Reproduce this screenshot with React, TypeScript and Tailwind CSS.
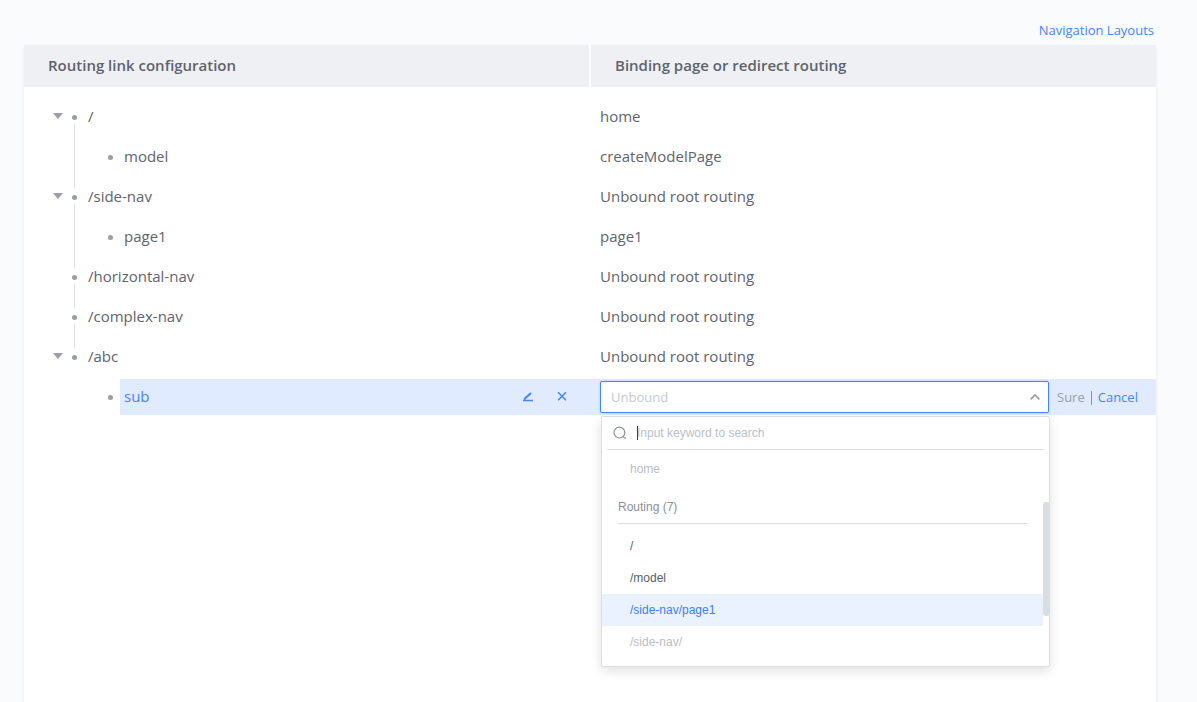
import { useState } from "react";

type Route = {
  label: string;
  target: string;
  depth: 0 | 1;
  open?: boolean;
  lineAbove?: boolean;
  lineBelow?: boolean;
};

const routes: Route[] = [
  { label: "/", target: "home", depth: 0, open: true, lineBelow: true },
  { label: "model", target: "createModelPage", depth: 1, lineAbove: true, lineBelow: true },
  { label: "/side-nav", target: "Unbound root routing", depth: 0, open: true, lineAbove: true, lineBelow: true },
  { label: "page1", target: "page1", depth: 1, lineAbove: true, lineBelow: true },
  { label: "/horizontal-nav", target: "Unbound root routing", depth: 0, lineAbove: true, lineBelow: true },
  { label: "/complex-nav", target: "Unbound root routing", depth: 0, lineAbove: true, lineBelow: true },
  { label: "/abc", target: "Unbound root routing", depth: 0, open: true, lineAbove: true },
];

const Dot = () => <span className="size-[5px] shrink-0 rounded-full bg-[#9b9ea8]" />;

function Gutter({ above, below, dot }: { above?: boolean; below?: boolean; dot?: boolean }) {
  const line = "w-px bg-[#dfe1e6]";
  return (
    <span className="flex h-10 w-[5px] shrink-0 flex-col items-center">
      <span className={above ? `${line} h-[11px]` : "h-[11px]"} />
      {dot ? (
        <span className="flex h-4 items-end pb-1">
          <Dot />
        </span>
      ) : (
        <span className={above && below ? `${line} h-4` : "h-4"} />
      )}
      <span className={below ? `${line} h-[13px]` : "h-[13px]"} />
    </span>
  );
}

function Toggle({ label }: { label: string }) {
  return (
    <button type="button" aria-label={`Collapse ${label}`} aria-expanded="true" className="w-[10px] shrink-0 pb-[2px]">
      <svg viewBox="0 0 10 6" className="block h-[6px] w-[10px] fill-[#9b9ea8]">
        <path d="M0 0h10L5 6z" />
      </svg>
    </button>
  );
}

function RouteRow({ route }: { route: Route }) {
  const child = route.depth === 1;
  return (
    <tr>
      <td className="p-0">
        <div className="flex h-10 items-center pl-[29px]">
          {route.open ? <Toggle label={route.label} /> : <span className="w-[10px]" />}
          <span className="w-[9px]" />
          <Gutter above={route.lineAbove} below={route.lineBelow} dot={!child} />
          {child && (
            <span className="flex pl-[31px]">
              <Dot />
            </span>
          )}
          <span className="pb-[2px] pl-[11px]">{route.label}</span>
        </div>
      </td>
      <td className="p-0 pb-[2px] pl-[10px]">{route.target}</td>
    </tr>
  );
}

const options = [
  { label: "/", style: "text-[#5a5e66]" },
  { label: "/model", style: "text-[#5a5e66]" },
  { label: "/side-nav/page1", style: "bg-[#ebf2ff] text-[#3d7dff]" },
  { label: "/side-nav/", style: "text-[#babdc3]" },
];

function Dropdown({ query, onQuery }: { query: string; onQuery: (value: string) => void }) {
  return (
    <div className="absolute top-full -right-px left-px z-10 mt-[3px] rounded-[2px] border border-[#dcdee6] bg-white pb-2 font-['Liberation_Sans',Arial,sans-serif] text-[12px] shadow-[0_4px_12px_rgba(0,0,0,0.12)]">
      <label className="mr-[5px] ml-[5px] flex h-[33px] items-center border-b border-[#dcdee6] pl-[6px]">
        <svg viewBox="0 0 14 14" className="size-[14px] shrink-0 fill-none stroke-[#8f939b] stroke-[1.2]">
          <circle cx="6.4" cy="6.6" r="5.4" />
          <path d="M9.8 10.4c1 1.2 1.8 1.6 3.2 2" />
        </svg>
        <span className="ml-[10px] h-[14px] w-px bg-[#33363d]" />
        <input
          aria-label="Search"
          placeholder="Input keyword to search"
          value={query}
          onChange={(e) => onQuery(e.target.value)}
          className="-ml-px min-w-0 flex-1 bg-transparent text-[#5a5e66] outline-none placeholder:text-[#b8bfcd]"
        />
      </label>
      <div role="listbox" aria-label="Pages and routing" className="pt-[3px] pr-[6px]">
        <div role="option" aria-selected="false" className="flex h-8 items-center pl-7 text-[#babdc3]">
          home
        </div>
        <div className="mr-4 mb-[6px] ml-4 flex h-[39px] items-end border-b border-[#dcdee6] pb-2 leading-4 text-[#8d919c]">
          Routing (7)
        </div>
        {options.map((o) => (
          <div
            key={o.label}
            role="option"
            aria-selected={o.label === "/side-nav/page1"}
            className={`flex h-8 items-center pl-7 ${o.style}`}
          >
            {o.label}
          </div>
        ))}
      </div>
      <span className="absolute top-[85px] -right-px h-[114px] w-[7px] rounded-[3px] bg-[#dadde4]" />
    </div>
  );
}

function EditRow() {
  const [query, setQuery] = useState("");
  return (
    <tr>
      <td className="p-0">
        <div className="flex h-10 items-center pl-[84px]">
          <Dot />
          <div className="ml-[7px] flex h-9 flex-1 items-center bg-[#e0ebff] pr-5 pl-1 text-[#4583ff]">
            <span className="flex-1 pb-[2px]">sub</span>
            <button type="button" aria-label="Edit" className="mr-[18px] size-4">
              <svg viewBox="0 0 16 16" className="block size-4 fill-none stroke-current">
                <path d="M3 11.5h10" strokeWidth="1.5" />
                <path d="M4.6 9.8L11 3.9" strokeWidth="2" />
                <path d="M3.8 11l.2-1.6 1.6.9z" fill="currentColor" strokeWidth="0.4" />
              </svg>
            </button>
            <button type="button" aria-label="Delete" className="size-4">
              <svg viewBox="0 0 16 16" className="block size-4 fill-none stroke-current stroke-[1.5]">
                <path d="M4 3.2l8 8M12 3.2l-8 8" />
              </svg>
            </button>
          </div>
        </div>
      </td>
      <td className="p-0">
        <div className="flex h-9 items-center bg-[#e0ebff] pl-[10px] text-[13px]">
          <div className="relative flex-1">
            <div className="flex h-8 items-center rounded-[2px] border border-[#4583ff] bg-white pr-2 pl-[10px] shadow-[0_0_2px_rgba(69,131,255,0.4)]">
              <input
                readOnly
                role="combobox"
                aria-expanded="true"
                aria-label="Binding page"
                placeholder="Unbound"
                className="min-w-0 flex-1 bg-transparent pt-[2px] outline-none placeholder:text-[#c3cad6]"
              />
              <svg viewBox="0 0 10 10" className="size-[10px] fill-none stroke-[#9b9ea8] stroke-[1.7]">
                <path d="M.6 7.4L5 3l4.4 4.4" />
              </svg>
            </div>
            <Dropdown query={query} onQuery={setQuery} />
          </div>
          <div className="flex w-[107px] items-center pt-[2px] pl-2">
            <button type="button" className="text-[#9b9ea8]">
              Sure
            </button>
            <span className="mx-[6px] h-[14px] w-px bg-[#8f929c]" />
            <button type="button" className="text-[#4583ff]">
              Cancel
            </button>
          </div>
        </div>
      </td>
    </tr>
  );
}

export default function App() {
  return (
    <main className="flex min-h-screen flex-col bg-[#fafbfd] pr-[41px] pl-6 font-['Open_Sans','Noto_Sans',sans-serif] text-[15px] text-[#5f636d]">
      <nav className="flex h-[45px] items-end justify-end pr-[2px] pb-[5px] text-[13px] leading-5">
        <a href="#layouts" className="text-[#4583ff]">
          Navigation Layouts
        </a>
      </nav>
      <section className="flex-1 bg-white shadow-[0_3px_3px_rgba(0,0,0,0.08)]">
        <table className="w-full table-fixed border-separate border-spacing-0 text-left">
          <thead className="bg-[#eff0f4]">
            <tr className="h-[42px] text-[#5f636d]">
              <th className="border-r border-white p-0 pb-[2px] pl-6 font-semibold">Routing link configuration</th>
              <th className="border-l border-white p-0 pb-[2px] pl-6 font-semibold">Binding page or redirect routing</th>
            </tr>
          </thead>
          <tbody>
            <tr aria-hidden="true" className="h-[10px]">
              <td colSpan={2} className="p-0" />
            </tr>
            {routes.map((route) => (
              <RouteRow key={route.label} route={route} />
            ))}
            <EditRow />
          </tbody>
        </table>
      </section>
    </main>
  );
}
